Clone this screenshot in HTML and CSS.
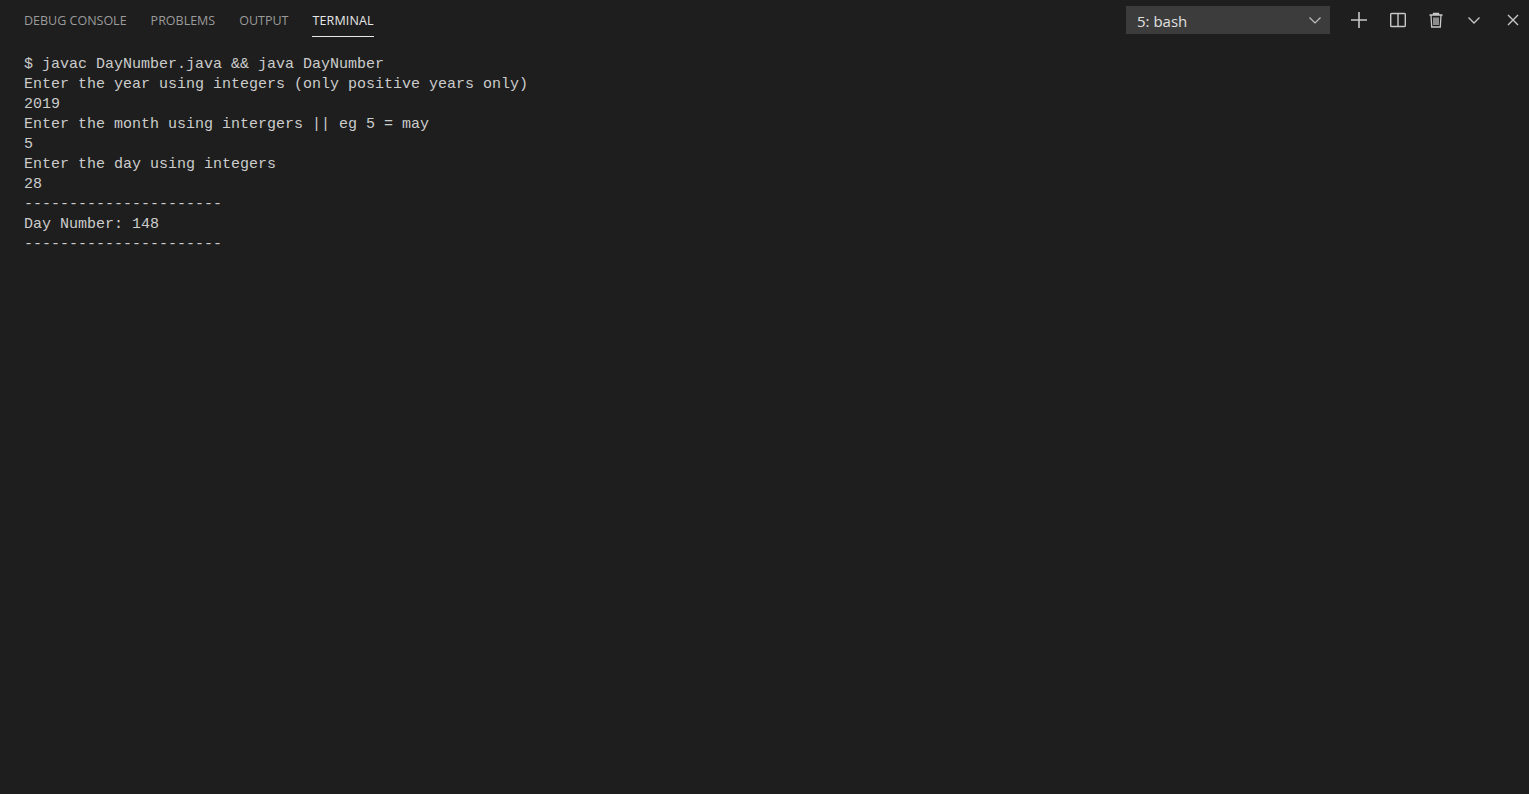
FILE: index.html
```html
<!DOCTYPE html>
<html lang="en">
<head>
<meta charset="utf-8">
<title>Terminal</title>
<link rel="stylesheet" href="styles.css">
</head>
<body>
<div class="panel">
  <header class="bar">
    <nav class="tabs">
      <span class="tab">DEBUG CONSOLE</span>
      <span class="tab">PROBLEMS</span>
      <span class="tab">OUTPUT</span>
      <span class="tab active">TERMINAL</span>
    </nav>
    <div class="actions">
      <div class="select">
        <span class="select-label">5: bash</span>
        <svg class="chev" width="16" height="16" viewBox="0 0 16 16"><path d="M2.500 5.500 8 11l5.500-5.500" fill="none" stroke="#c5c5c5" stroke-width="1.100"/></svg>
      </div>
      <div class="icons">
        <svg class="icon-plus" width="18" height="18" viewBox="0 0 18 18"><path d="M9 1v16M1 9h16" fill="none" stroke="#c8c8c8" stroke-width="1.600"/></svg>
        <svg class="icon-split" width="18" height="18" viewBox="0 0 18 18"><path d="M2.500 2.500h13a.8.8 0 0 1 .8.8v11.400a.8.8 0 0 1-.8.8h-13a.8.8 0 0 1-.8-.8V3.300a.8.8 0 0 1 .8-.8zM9 2.500v13" fill="none" stroke="#c8c8c8" stroke-width="1.400"/></svg>
        <svg class="icon-trash" width="18" height="18" viewBox="0 0 18 18"><path d="M2.500 4h13M6.500 4V2.500h5V4M4 4l.7 12h8.600L14 4M7 6.500v7.500M9 6.500v7.500M11 6.500v7.500" fill="none" stroke="#c8c8c8" stroke-width="1.300"/></svg>
        <svg class="icon-chev" width="16" height="16" viewBox="0 0 16 16"><path d="M2.500 5.500 8 11l5.500-5.500" fill="none" stroke="#c8c8c8" stroke-width="1.300"/></svg>
        <svg class="icon-close" width="14" height="14" viewBox="0 0 14 14"><path d="M2 2l10 10M12 2 2 12" fill="none" stroke="#c8c8c8" stroke-width="1.400"/></svg>
      </div>
    </div>
  </header>
  <pre class="term">$ javac DayNumber.java &amp;&amp; java DayNumber
Enter the year using integers (only positive years only)
2019
Enter the month using intergers || eg 5 = may
5
Enter the day using integers
28
----------------------
Day Number: 148
----------------------</pre>
</div>
</body>
</html>
```
FILE: styles.css
```css
* { box-sizing: border-box; }
html, body { margin: 0; height: 100%; background: #1e1e1e; overflow: hidden; }
.panel { height: 794px; display: flex; flex-direction: column; background: #1e1e1e; }
.bar { display: flex; justify-content: space-between; align-items: flex-start; padding: 6px 9px 0 24px; height: 55px; }
.tabs { display: flex; gap: 24px; font-family: "Open Sans", sans-serif; font-size: 12.500px; color: #9b9b9b; }
.tab { height: 31px; padding-top: 7px; line-height: 16px; }
.tab.active { color: #e7e7e7; border-bottom: 1px solid #e7e7e7; letter-spacing: 0.150px; }
.actions { display: flex; align-items: flex-start; }
.select { width: 204px; height: 28px; background: #3c3c3c; color: #e0e0e0; font-family: "Open Sans", sans-serif; font-size: 15px; display: flex; align-items: center; justify-content: space-between; padding: 0 7px 0 11px; }
.select-label { padding-top: 1px; }
.icons { display: flex; align-items: center; height: 28px; margin-left: 20px; }
.icon-split { margin-left: 21px; }
.icon-trash { margin-left: 20px; }
.icon-chev { margin-left: 21px; }
.icon-close { margin-left: 24px; }
.term { margin: 0; padding-left: 24px; font-family: "Liberation Mono", monospace; font-size: 15px; line-height: 20px; color: #cccccc; }
```
